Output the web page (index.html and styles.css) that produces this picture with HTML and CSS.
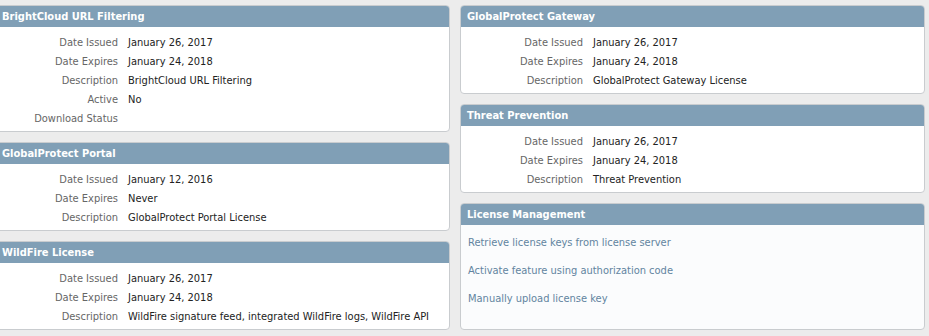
FILE: index.html
```
<!DOCTYPE html>
<html lang="en">
<head>
    <meta charset="UTF-8">
    <title>Licenses</title>
    <link rel="stylesheet" href="styles.css">
</head>
<body>
<div class="page">
    <div class="column left">
        <div class="panel">
            <div class="panel-title">BrightCloud URL Filtering</div>
            <table class="info">
                <tr><td class="label">Date Issued</td><td>January 26, 2017</td></tr>
                <tr><td class="label">Date Expires</td><td>January 24, 2018</td></tr>
                <tr><td class="label">Description</td><td>BrightCloud URL Filtering</td></tr>
                <tr><td class="label">Active</td><td>No</td></tr>
                <tr><td class="label">Download Status</td><td></td></tr>
            </table>
        </div>
        <div class="panel">
            <div class="panel-title">GlobalProtect Portal</div>
            <table class="info">
                <tr><td class="label">Date Issued</td><td>January 12, 2016</td></tr>
                <tr><td class="label">Date Expires</td><td>Never</td></tr>
                <tr><td class="label">Description</td><td>GlobalProtect Portal License</td></tr>
            </table>
        </div>
        <div class="panel">
            <div class="panel-title">WildFire License</div>
            <table class="info">
                <tr><td class="label">Date Issued</td><td>January 26, 2017</td></tr>
                <tr><td class="label">Date Expires</td><td>January 24, 2018</td></tr>
                <tr><td class="label">Description</td><td>WildFire signature feed, integrated WildFire logs, WildFire API</td></tr>
            </table>
        </div>
    </div>
    <div class="column right">
        <div class="panel">
            <div class="panel-title">GlobalProtect Gateway</div>
            <table class="info">
                <tr><td class="label">Date Issued</td><td>January 26, 2017</td></tr>
                <tr><td class="label">Date Expires</td><td>January 24, 2018</td></tr>
                <tr><td class="label">Description</td><td>GlobalProtect Gateway License</td></tr>
            </table>
        </div>
        <div class="panel">
            <div class="panel-title">Threat Prevention</div>
            <table class="info">
                <tr><td class="label">Date Issued</td><td>January 26, 2017</td></tr>
                <tr><td class="label">Date Expires</td><td>January 24, 2018</td></tr>
                <tr><td class="label">Description</td><td>Threat Prevention</td></tr>
            </table>
        </div>
        <div class="panel grow">
            <div class="panel-title">License Management</div>
            <div class="links">
                <a href="#">Retrieve license keys from license server</a>
                <a href="#">Activate feature using authorization code</a>
                <a href="#">Manually upload license key</a>
            </div>
        </div>
    </div>
</div>
</body>
</html>
```

FILE: styles.css
```
body {
    margin: 0;
    background-color: #ececec;
    font-family: "DejaVu Sans Condensed", "DejaVu Sans", sans-serif;
    font-size: 11px;
    color: #222;
    overflow: hidden;
}
.page {
    display: flex;
    gap: 10px;
    padding: 5px 4px 6px 0;
    margin-left: -5px;
    height: 336px;
    box-sizing: border-box;
}
.column {
    display: flex;
    flex-direction: column;
    gap: 10px;
}
.left {
    width: 455px;
}
.right {
    width: 465px;
}
.panel {
    background-color: #fff;
    border: 1px solid #c9cccf;
    border-radius: 4px;
    overflow: hidden;
}
.panel.grow {
    flex: 1;
    background-color: #fbfcfd;
}
.panel-title {
    background-color: #809fb6;
    color: #fff;
    font-weight: bold;
    height: 21px;
    line-height: 21px;
    padding-left: 6px;
}
.info {
    border-collapse: collapse;
    margin: 6px 0 3px;
}
.info td {
    height: 19px;
    padding: 0 0 0 10px;
    white-space: nowrap;
}
.info td.label {
    width: 122px;
    padding: 0;
    text-align: right;
    color: #666;
}
.links {
    padding: 4px 7px;
}
.links a {
    display: block;
    line-height: 28px;
    color: #6284a0;
    text-decoration: none;
}
```
